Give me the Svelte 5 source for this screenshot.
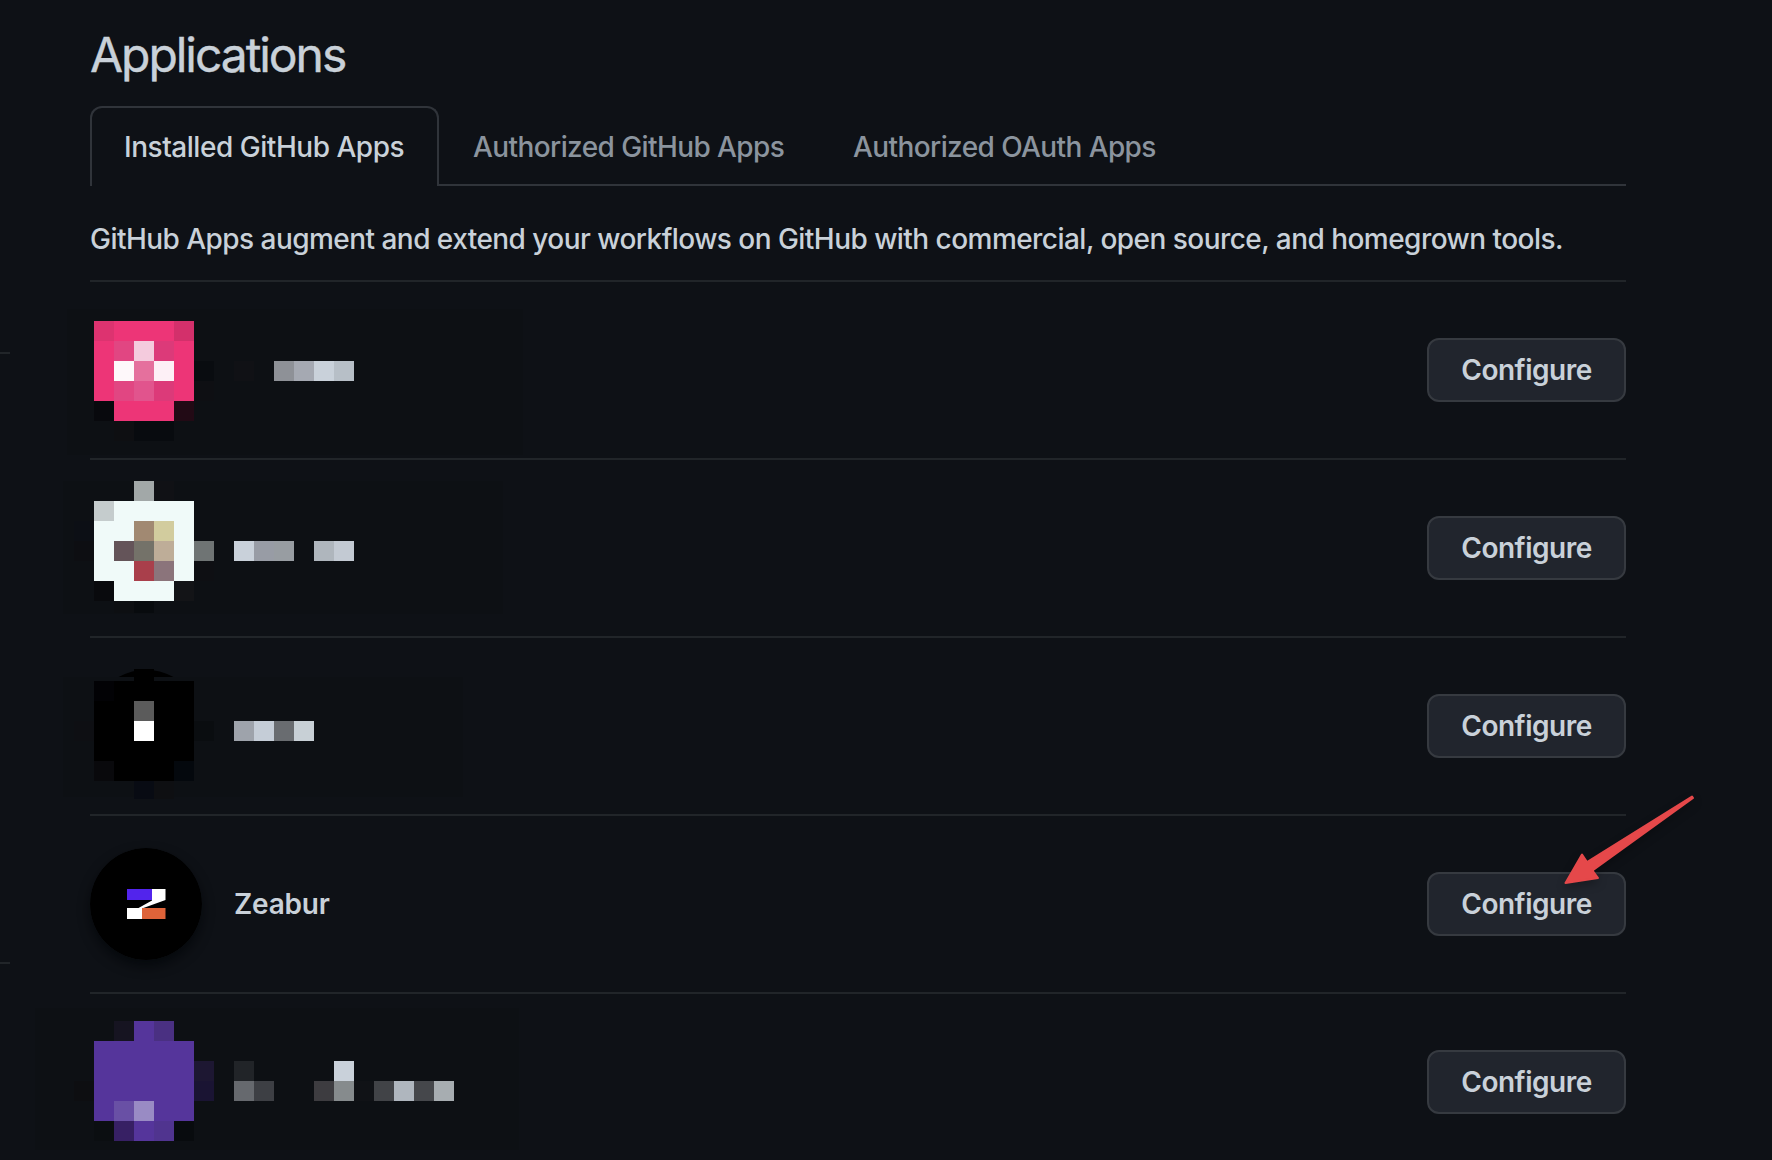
<script>
  const C = 20;
  // Pixelated blocks: [column, row, width, height, colour] in mosaic cells
  const apps = [
    {
      top: 321, haze: [67, 309, 456, 146],
      cells: [
        [0,0,5,4,'#ed3577'],[0,0,1,1,'#dd3370'],[4,0,1,1,'#d3306b'],
        [1,1,1,1,'#e14682'],[2,1,1,1,'#f4cbdd'],[3,1,1,1,'#dc3a79'],
        [1,2,1,1,'#fef8fa'],[2,2,1,1,'#e5709d'],[3,2,1,1,'#fdf0f6'],
        [1,3,1,1,'#e14682'],[2,3,1,1,'#e1548d'],[3,3,1,1,'#dc3a79'],
        [0,4,1,1,'#08090d'],[1,4,3,1,'#ed3577'],[4,4,1,1,'#220a15'],
        [5,2,1,1,'#090c10'],[5,3,1,1,'#0e0f13'],
        [1,5,1,1,'#0e0f12'],[2,5,2,1,'#080b0f'],[7,2,1,1,'#101115'],
        [9,2,1,1,'#8e9197'],[10,2,1,1,'#a5a9b2'],[11,2,1,1,'#c9d1da'],[12,2,1,1,'#b7bfc7']
      ]
    },
    {
      top: 481, haze: [63, 481, 440, 133],
      cells: [
        [2,0,1,1,'#a2a8a8'],[3,0,1,1,'#101115'],[0,1,5,4,'#f0faf9'],[0,1,1,1,'#c5cccd'],
        [2,2,1,1,'#a18972'],[3,2,1,1,'#d2cc9e'],[1,3,1,1,'#645459'],[2,3,1,1,'#747269'],[3,3,1,1,'#bead98'],
        [2,4,1,1,'#a93f4b'],[3,4,1,1,'#8b747b'],[0,5,1,1,'#090a0d'],[1,5,3,1,'#f0faf9'],[4,5,1,1,'#131417'],
        [1,6,1,.6,'#0d0f12'],[2,6,1,.6,'#080b0e'],[-1,3,1,1,'#0d0e12'],[-1,2,1,1,'#0c0f15'],[5,4,1,1,'#0e0f13'],
        [5,3,1,1,'#6f7474'],[7,3,1,1,'#c9d1da'],[8,3,1,1,'#989ca5'],[9,3,1,1,'#989da2'],
        [11,3,1,1,'#afb6bd'],[12,3,1,1,'#c3cad3']
      ]
    },
    {
      top: 681, haze: [63, 677, 400, 120], cap: true,
      cells: [
        [2,-.6,1,1,'#000'],[0,0,5,4,'#000'],[0,0,1,1,'#020205'],[1,4,3,1,'#000'],[0,4,1,1,'#09090c'],[4,4,1,1,'#04080d'],
        [2,1,1,1,'#5b5b5b'],[2,2,1,1,'#fff'],[2,5,1,.9,'#080b13'],[3,5,1,.9,'#0e0f12'],
        [-1,2,1,1,'#0e0f13'],[5,2,1,1,'#0a0d10'],
        [7,2,1,1,'#9ea3ab'],[8,2,1,1,'#c5cdd7'],[9,2,1,1,'#696c70'],[10,2,1,1,'#c8d0d6']
      ]
    },
    { name: 'Zeabur' },
    {
      top: 1021, haze: [35, 1008, 484, 142],
      cells: [
        [1,0,1,1,'#161421'],[2,0,1,1,'#55359b'],[3,0,1,1,'#4a3082'],[0,1,5,4,'#55359b'],
        [1,4,1,1,'#6950a5'],[2,4,1,1,'#998bc4'],[0,5,1,1,'#0b0e11'],[1,5,1,1,'#372064'],[2,5,1,1,'#55359b'],[3,5,1,1,'#50348f'],[4,5,1,1,'#080b0e'],
        [5,2,1,1,'#1d1732'],[5,3,1,1,'#1a1433'],[-1,3,1,1,'#0d0e11'],
        [7,2,1,1,'#212428'],[7,3,1,1,'#66696e'],[8,3,1,1,'#3d3f44'],
        [11,3,1,1,'#3d3c40'],[12,2,1,1,'#c9d1da'],[12,3,1,1,'#868b8d'],[13,3,1,1,'#101216'],
        [14,3,1,1,'#414347'],[15,3,1,1,'#afb6be'],[16,3,1,1,'#45474b'],[17,3,1,1,'#a7adb1']
      ]
    }
  ];
  const tabs = ['Installed GitHub Apps', 'Authorized GitHub Apps', 'Authorized OAuth Apps'];
  const rowTop = (i) => 282 + i * 178;
</script>

<div class="page">
  <svg class="ticks" width="10" height="1160" aria-hidden="true">
    <rect y="352" width="10" height="2" /><rect y="962" width="10" height="2" />
  </svg>
  <main>
    <h1>Applications</h1>
    <nav>
      {#each tabs as label, i}
        <a class:active={i === 0} class="tab t{i}" href="#top">{label}</a>
      {/each}
    </nav>
    <p>GitHub Apps augment and extend your workflows on GitHub with commercial, open source, and homegrown tools.</p>
    <ul>
      {#each apps as app, i}
        <li>
          {#if app.name}
            <svg class="avatar" viewBox="0 0 112 112" aria-hidden="true">
              <circle cx="56" cy="56" r="56" fill="#000" />
              <g class="logo">
                <path fill="#fff" d="M62 41H75.500V52L52 60.500V71H37V60H48.500L62 52.500Z" />
                <path fill="#5224ec" d="M37 41H62V52H37Z" />
                <path fill="#de6339" d="M52 60H75.500V71H52Z" />
              </g>
            </svg>
            <strong>{app.name}</strong>
          {:else}
            <svg class="mosaic" width="630" height="176" viewBox="30 {rowTop(i)} 630 176" shape-rendering="crispEdges" aria-hidden="true">
              <rect x={app.haze[0]} y={app.haze[1]} width={app.haze[2]} height={app.haze[3]} fill="#0d1014" />
              {#if app.cap}
                <path shape-rendering="auto" fill="#000" d="M118.500 677Q146 662.500 173.500 677Z" />
              {/if}
              {#each app.cells as [x, y, w, h, fill]}
                <rect x={94 + x * C} y={app.top + y * C} width={w * C} height={h * C} {fill} />
              {/each}
            </svg>
          {/if}
          <button>Configure</button>
        </li>
      {/each}
    </ul>
  </main>
  <svg class="arrow" width="150" height="110" viewBox="1555 785 150 110" aria-hidden="true">
    <path d="M1692 796.500L1587 862L1582 854.500L1565.500 883L1598 878L1592.500 870.500L1693 798Z" />
  </svg>
</div>

<style>
  :global(body) { background: #0e1116; overflow: hidden; }
  .page {
    position: relative; width: 1772px; height: 1160px; overflow: hidden; box-sizing: border-box;
    padding-left: 90px; background: #0e1116; color: #c9d1d9;
    font-family: Inter, "Liberation Sans", sans-serif; font-size: 28px; line-height: 42px;
  }
  main { width: 1536px; }
  h1 { margin: 0; padding-top: 20px; height: 106px; box-sizing: border-box; font-size: 48px; line-height: 70px; font-weight: 400; letter-spacing: -2.05px; white-space: nowrap; -webkit-text-stroke: 0.4px currentColor; }
  nav { display: flex; height: 80px; box-sizing: border-box; box-shadow: inset 0 -2px #30343a; }
  .tab { box-sizing: border-box; height: 80px; border: 2px solid transparent; border-bottom: 0; padding: 18px 32px; color: #8b949e; font-weight: 500; text-decoration: none; white-space: nowrap; letter-spacing: -0.59px; }
  .active { color: #c9d1d9; background: #0e1116; border-color: #30343a; border-radius: 12px 12px 0 0; letter-spacing: -0.47px; }
  .t0 { width: 349px; }
  .t1 { width: 380px; }
  p { margin: 0; padding-top: 32px; height: 94px; box-sizing: border-box; font-weight: 500; letter-spacing: -0.54px; white-space: nowrap; }
  ul { list-style: none; margin: 0; padding: 0; }
  li { display: flex; align-items: center; height: 178px; box-sizing: border-box; border-top: 2px solid #212529; }
  .mosaic { display: block; margin-left: -60px; }
  .avatar { width: 112px; height: 112px; border-radius: 50%; box-shadow: 0 6px 12px #020408aa; }
  .logo { filter: blur(.6px); }
  strong { margin-left: 32px; font-weight: 600; letter-spacing: -0.2px; }
  button {
    margin-left: auto; width: 199px; height: 64px; border: 2px solid #363a40; border-radius: 12px; padding: 0;
    background: #21252d; color: #c9d1d9; font: inherit; font-weight: 600; line-height: 40px; letter-spacing: -0.5px;
  }
  .ticks { position: absolute; left: 0; top: 0; fill: #212529; }
  .arrow { position: absolute; left: 1555px; top: 785px; fill: #e5484a; stroke: #e5484a; stroke-width: 2px; stroke-linejoin: round; filter: drop-shadow(0 4px 4px #0004); }
</style>
